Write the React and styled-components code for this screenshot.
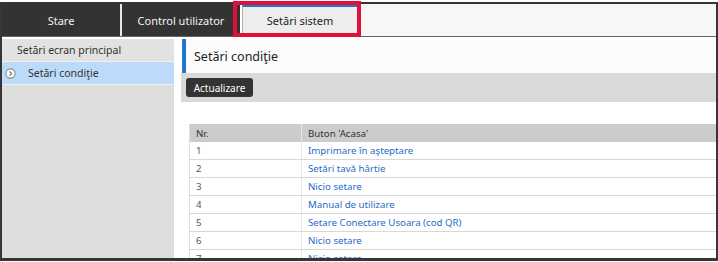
import React from 'react';
import styled, { createGlobalStyle } from 'styled-components';

const GlobalStyle = createGlobalStyle`
  html, body {
    margin: 0;
    padding: 0;
    background: #ffffff;
  }
  body {
    font-family: "Noto Sans", "Open Sans", sans-serif;
  }
`;

const Page = styled.div`
  position: relative;
  width: 718px;
  height: 262px;
  padding-top: 2px;
  box-sizing: border-box;
`;

const Frame = styled.div`
  width: 718px;
  height: 259px;
  box-sizing: border-box;
  border: 2px solid #3a3434;
  border-bottom-width: 3px;
  background: #fff;
  overflow: hidden;
  display: flex;
  flex-direction: column;
`;

const TabBar = styled.div`
  display: flex;
  height: 32px;
  flex-shrink: 0;
  background: #f7f7f7;
  border-bottom: 1px solid #666;
`;

const Tab = styled.div`
  width: ${(p) => p.width}px;
  display: flex;
  align-items: center;
  justify-content: center;
  background: #333333;
  color: #f2f2f2;
  font-size: 11px;
  border-right: 2px solid ${(p) => (p.gap ? '#fff' : '#e8e8e8')};
`;

const ActiveTab = styled.div`
  width: 114px;
  margin: 1px 0 2px;
  display: flex;
  align-items: center;
  justify-content: center;
  background: #ededed;
  color: #222;
  font-size: 11px;
  border: 1px solid #b0b0b0;
  border-top: 2px solid #1f78c9;
`;

const Highlight = styled.div`
  position: absolute;
  left: 233px;
  top: 1px;
  width: 128px;
  height: 36px;
  box-sizing: border-box;
  border: 4px solid #e0103c;
  pointer-events: none;
`;

const Body = styled.div`
  flex: 1;
  display: flex;
  gap: 7px;
  padding-top: 2px;
  min-height: 0;
`;

const Sidebar = styled.div`
  width: 172px;
  flex-shrink: 0;
  background: #dedede;
  display: flex;
  flex-direction: column;
`;

const NavItem = styled.div`
  height: 22px;
  display: flex;
  align-items: center;
  gap: 12px;
  padding-left: ${(p) => (p.active ? '3px' : '15px')};
  background: ${(p) => (p.active ? '#bcdbfb' : '#e2e2e2')};
  border-bottom: 1px solid #f2f2f2;
  font-size: 10.5px;
  color: #333;
`;

const Main = styled.div`
  flex: 1;
  display: flex;
  flex-direction: column;
  min-width: 0;
`;

const TitleBar = styled.div`
  height: 34px;
  flex-shrink: 0;
  display: flex;
  align-items: center;
  padding-left: 8px;
  border-left: 4px solid #1f78c9;
  margin-left: 1px;
  background: #fcfcfc;
  font-size: 12.5px;
  color: #222;
`;

const Toolbar = styled.div`
  height: 29px;
  flex-shrink: 0;
  display: flex;
  align-items: center;
  padding-left: 5px;
  background: #d9d9d9;
`;

const Button = styled.button`
  height: 19px;
  width: 67px;
  padding: 0;
  border: none;
  border-radius: 3px;
  background: #333333;
  color: #fff;
  font-family: inherit;
  font-size: 10px;
`;

const Table = styled.table`
  margin: 22px 0 0 8px;
  width: 640px;
  border-collapse: collapse;
  font-size: 9.7px;
  border-left: 1px solid #dddddd;
`;

const Th = styled.th`
  height: 18px;
  padding: 0 0 0 6px;
  text-align: left;
  font-weight: normal;
  color: #333;
  background: #cccccc;
  width: ${(p) => (p.narrow ? '105px' : 'auto')};
  border-right: 1px solid #e6e6e6;
`;

const Td = styled.td`
  height: 17px;
  padding: 0 0 0 6px;
  color: ${(p) => (p.link ? '#1f6bc8' : '#555')};
  border-bottom: 1px solid #d8d8d8;
  border-right: 1px solid #e6e6e6;
`;

const ArrowIcon = () => (
  <svg width="11" height="11" viewBox="0 0 11 11">
    <circle cx="5.5" cy="5.5" r="4.6" fill="#fff" stroke="#8a8a8a" strokeWidth="1.1" />
    <path d="M4.5 3.4 L6.6 5.5 L4.5 7.6" fill="none" stroke="#7a7a7a" strokeWidth="1.3" />
  </svg>
);

const rows = [
  'Imprimare în aşteptare',
  'Setări tavă hârtie',
  'Nicio setare',
  'Manual de utilizare',
  'Setare Conectare Usoara (cod QR)',
  'Nicio setare',
  'Nicio setare',
];

export default function App() {
  return (
    <Page>
      <GlobalStyle />
      <Frame>
        <TabBar>
          <Tab width={118}>Stare</Tab>
          <Tab width={118} gap>Control utilizator</Tab>
          <ActiveTab>Setări sistem</ActiveTab>
        </TabBar>
        <Body>
          <Sidebar>
            <NavItem>Setări ecran principal</NavItem>
            <NavItem active>
              <ArrowIcon />
              <span>Setări condiţie</span>
            </NavItem>
          </Sidebar>
          <Main>
            <TitleBar>Setări condiţie</TitleBar>
            <Toolbar>
              <Button>Actualizare</Button>
            </Toolbar>
            <Table>
              <thead>
                <tr>
                  <Th narrow>Nr.</Th>
                  <Th>Buton 'Acasa'</Th>
                </tr>
              </thead>
              <tbody>
                {rows.map((r, i) => (
                  <tr key={i}>
                    <Td>{i + 1}</Td>
                    <Td link>{r}</Td>
                  </tr>
                ))}
              </tbody>
            </Table>
          </Main>
        </Body>
      </Frame>
      <Highlight />
    </Page>
  );
}
